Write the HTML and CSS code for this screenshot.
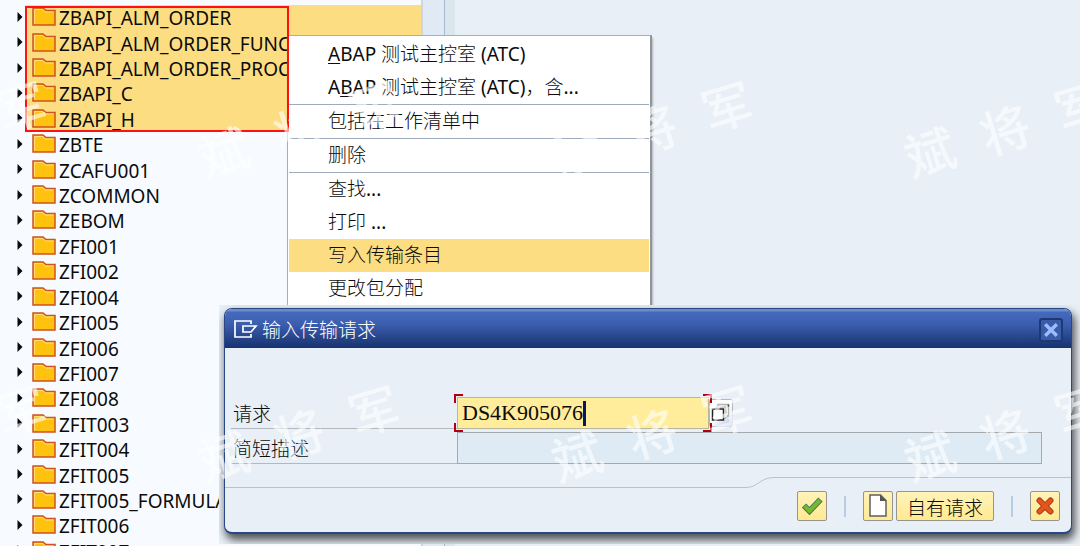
FILE: index.html
```
<!DOCTYPE html>
<html lang="zh-CN">
<head>
<meta charset="utf-8">
<title>输入传输请求</title>
<link rel="stylesheet" href="styles.css">
</head>
<body>
<svg class="defs" aria-hidden="true">
  <symbol id="arrow" viewBox="0 0 6 12"><path d="M0.500 1L5.500 6L0.500 11Z" fill="#0a0a0a"/></symbol>
  <symbol id="folder" viewBox="0 0 24 19">
    <path d="M1 1H11L14 3.500H23V18H1Z" fill="#ffc20f" stroke="#cf5220" stroke-width="1.500"/>
    <path d="M2.500 16.500V2.500H10.500L13.500 5H21.500" fill="none" stroke="#ffdf7a"/>
  </symbol>
</svg>

<main class="workspace">
  <nav class="tree-pane" aria-label="包">
    <ul class="tree">
      <li class="node selected"><svg class="arrow"><use href="#arrow"/></svg><span class="cell"><svg class="folder"><use href="#folder"/></svg>ZBAPI_ALM_ORDER</span></li>
      <li class="node selected"><svg class="arrow"><use href="#arrow"/></svg><span class="cell"><svg class="folder"><use href="#folder"/></svg>ZBAPI_ALM_ORDER_FUNC</span></li>
      <li class="node selected"><svg class="arrow"><use href="#arrow"/></svg><span class="cell"><svg class="folder"><use href="#folder"/></svg>ZBAPI_ALM_ORDER_PROC</span></li>
      <li class="node selected"><svg class="arrow"><use href="#arrow"/></svg><span class="cell"><svg class="folder"><use href="#folder"/></svg>ZBAPI_C</span></li>
      <li class="node selected"><svg class="arrow"><use href="#arrow"/></svg><span class="cell"><svg class="folder"><use href="#folder"/></svg>ZBAPI_H</span></li>
      <li class="node"><svg class="arrow"><use href="#arrow"/></svg><span class="cell"><svg class="folder"><use href="#folder"/></svg>ZBTE</span></li>
      <li class="node"><svg class="arrow"><use href="#arrow"/></svg><span class="cell"><svg class="folder"><use href="#folder"/></svg>ZCAFU001</span></li>
      <li class="node"><svg class="arrow"><use href="#arrow"/></svg><span class="cell"><svg class="folder"><use href="#folder"/></svg>ZCOMMON</span></li>
      <li class="node"><svg class="arrow"><use href="#arrow"/></svg><span class="cell"><svg class="folder"><use href="#folder"/></svg>ZEBOM</span></li>
      <li class="node"><svg class="arrow"><use href="#arrow"/></svg><span class="cell"><svg class="folder"><use href="#folder"/></svg>ZFI001</span></li>
      <li class="node"><svg class="arrow"><use href="#arrow"/></svg><span class="cell"><svg class="folder"><use href="#folder"/></svg>ZFI002</span></li>
      <li class="node"><svg class="arrow"><use href="#arrow"/></svg><span class="cell"><svg class="folder"><use href="#folder"/></svg>ZFI004</span></li>
      <li class="node"><svg class="arrow"><use href="#arrow"/></svg><span class="cell"><svg class="folder"><use href="#folder"/></svg>ZFI005</span></li>
      <li class="node"><svg class="arrow"><use href="#arrow"/></svg><span class="cell"><svg class="folder"><use href="#folder"/></svg>ZFI006</span></li>
      <li class="node"><svg class="arrow"><use href="#arrow"/></svg><span class="cell"><svg class="folder"><use href="#folder"/></svg>ZFI007</span></li>
      <li class="node"><svg class="arrow"><use href="#arrow"/></svg><span class="cell"><svg class="folder"><use href="#folder"/></svg>ZFI008</span></li>
      <li class="node"><svg class="arrow"><use href="#arrow"/></svg><span class="cell"><svg class="folder"><use href="#folder"/></svg>ZFIT003</span></li>
      <li class="node"><svg class="arrow"><use href="#arrow"/></svg><span class="cell"><svg class="folder"><use href="#folder"/></svg>ZFIT004</span></li>
      <li class="node"><svg class="arrow"><use href="#arrow"/></svg><span class="cell"><svg class="folder"><use href="#folder"/></svg>ZFIT005</span></li>
      <li class="node"><svg class="arrow"><use href="#arrow"/></svg><span class="cell"><svg class="folder"><use href="#folder"/></svg>ZFIT005_FORMULA</span></li>
      <li class="node"><svg class="arrow"><use href="#arrow"/></svg><span class="cell"><svg class="folder"><use href="#folder"/></svg>ZFIT006</span></li>
      <li class="node"><svg class="arrow"><use href="#arrow"/></svg><span class="cell"><svg class="folder"><use href="#folder"/></svg>ZFIT007</span></li>
    </ul>
  </nav>
  <div class="scroll-strip"></div>
  <div class="splitter"></div>
  <section class="canvas"></section>
</main>

<div class="context-menu" role="menu">
  <button class="item" role="menuitem"><u>A</u>BAP <span class="han">测试主控室</span> (ATC)</button>
  <button class="item" role="menuitem">A<u>B</u>AP <span class="han">测试主控室</span> (ATC)<span class="han">，含</span>...</button>
  <hr class="rule">
  <button class="item" role="menuitem"><span class="han">包括在工作清单中</span></button>
  <hr class="rule">
  <button class="item" role="menuitem"><span class="han">删除</span></button>
  <hr class="rule">
  <button class="item" role="menuitem"><span class="han">查找</span>...</button>
  <button class="item" role="menuitem"><span class="han">打印</span> ...</button>
  <button class="item active" role="menuitem"><span class="han">写入传输条目</span></button>
  <button class="item" role="menuitem"><span class="han">更改包分配</span></button>
</div>

<div class="marker"></div>

<div class="dialog-layer">
  <form class="dialog" role="dialog" aria-labelledby="dialog-title">
    <header class="titlebar">
      <svg class="title-icon" viewBox="0 0 24 18"><path d="M17 4V1H1V17H17V14M9 6H22L17 12H9Z" fill="none" stroke="#fff" stroke-width="1.700"/></svg>
      <h1 class="title han" id="dialog-title">输入传输请求</h1>
      <button class="close" type="button" aria-label="关闭"><svg viewBox="0 0 14 14"><path d="M3 3L11 11M11 3L3 11" stroke="#9dbcff" stroke-width="3" stroke-linecap="square"/></svg></button>
    </header>
    <div class="fields">
      <label class="label han" for="request">请求</label>
      <div class="request-cell">
        <div class="focus-frame">
          <input class="input request" id="request" type="text" value="DS4K905076">
          <span class="caret"></span>
          <i class="corner tl"></i><i class="corner tr"></i><i class="corner bl"></i><i class="corner br"></i>
        </div>
        <button class="value-help" type="button" aria-label="值帮助"><svg viewBox="0 0 20 20"><path d="M7 1.500H17.500V13H15Z" fill="#fff"/><path d="M7 3V1.500H17.500V13H16" fill="none" stroke="#444" stroke-width="1.500"/><path d="M5 6V4H15V15H13" fill="#fff" stroke="#999"/><rect x="1.500" y="6" width="11" height="11" fill="#fff" stroke="#222" stroke-width="1.500"/></svg></button>
      </div>
      <label class="label han" for="description">简短描述</label>
      <input class="input description" id="description" type="text" readonly>
    </div>
    <div class="edge">
      <span class="edge-low"></span>
      <svg class="edge-curve" viewBox="0 0 28 11"><path d="M0 10.500C12 10.500 14 0.500 28 0.500" fill="none" stroke="#b9c3d0"/></svg>
      <span class="edge-high"></span>
    </div>
    <footer class="actions">
      <button class="btn" type="submit" aria-label="继续"><svg viewBox="0 0 22 24"><path d="M3 11.500L8.500 17L19.500 5.500" fill="none" stroke="#3f7460" stroke-width="6"/><path d="M3.500 12L8.500 17L19 6" fill="none" stroke="#77b82a" stroke-width="4"/></svg></button>
      <span class="divider"></span>
      <div class="group">
        <button class="btn" type="button" aria-label="创建请求"><svg viewBox="0 0 22 24"><path d="M3 1H13.500L19 6.500V22H3Z" fill="#fff" stroke="#5f5f5f" stroke-width="1.500"/><path d="M13 1V7H19.500Z" fill="#555"/></svg></button>
        <button class="btn wide han" type="button">自有请求</button>
      </div>
      <span class="divider"></span>
      <button class="btn" type="button" aria-label="取消"><svg viewBox="0 0 22 24"><path d="M5.500 6.500L16.500 17.500M16.500 6.500L5.500 17.500" stroke="#a8341a" stroke-width="6" stroke-linecap="round"/><path d="M5.500 6.500L16.500 17.500M16.500 6.500L5.500 17.500" stroke="#e2561a" stroke-width="4" stroke-linecap="round"/></svg></button>
    </footer>
  </form>
</div>

<svg class="watermark" aria-hidden="true">
  <defs>
    <pattern id="mark" x="-132" y="-60" width="353" height="304" patternUnits="userSpaceOnUse">
      <g class="mark-text">
        <text transform="translate(4 212) rotate(-17)" x="-26" y="19">斌</text>
        <text transform="translate(79 190) rotate(-17)" x="-26" y="19">将</text>
        <text transform="translate(154 167) rotate(-17)" x="-26" y="19">军</text>
        <text transform="translate(357 212) rotate(-17)" x="-26" y="19">斌</text>
      </g>
    </pattern>
  </defs>
  <rect width="100%" height="100%" fill="url(#mark)"/>
</svg>
</body>
</html>
```
FILE: styles.css
```
* { box-sizing: border-box; }

body {
  position: relative;
  margin: 0;
  height: 100vh;
  overflow: hidden;
  background: #e8eff6;
  color: #0b0b0b;
  font: 19px/25px "Noto Sans", "Noto Sans CJK SC", sans-serif;
}

button, input { font: inherit; color: inherit; }
button { padding: 0; border: 0; background: none; }
.defs { position: absolute; width: 0; height: 0; }
.han { font-family: "Noto Sans CJK SC", sans-serif; font-weight: 300; }

/* Object tree */
.workspace { display: flex; height: 100%; overflow: hidden; }
.tree-pane { flex: 0 0 421px; padding-top: 5px; background: #f7faff; }
.tree {
  display: grid;
  grid-auto-rows: 1fr;
  height: 559px;
  margin: 0;
  padding: 0;
  list-style: none;
}
.node { display: flex; align-items: center; gap: 9px; padding-left: 17px; min-height: 0; }
.arrow { flex: none; width: 6px; height: 12px; margin-bottom: 2px; }
.cell { display: flex; align-items: center; align-self: stretch; gap: 3px; padding-top: 2px; white-space: nowrap; }
.folder { flex: none; width: 24px; height: 19px; margin-bottom: 4px; }
.selected { background: linear-gradient(90deg, transparent 26px, #fddd82 26px); }
.scroll-strip { flex: 0 0 24px; background: #e1eaf4; border-left: 2px solid #cbd6e2; border-right: 1px solid #a9b9cc; }
.splitter { flex: 0 0 10px; background: #dbe5ed; }
.canvas { flex: 1; }

/* Highlight frame round the selected packages */
.marker { position: absolute; left: 25px; top: 6px; width: 264px; height: 126px; border: 2px solid #f11; }

/* Context menu */
.context-menu {
  position: absolute;
  left: 287px;
  top: 35px;
  width: 365px;
  padding: 2px 1px;
  display: flex;
  flex-direction: column;
  background: #fff;
  border: 1px solid #a9afb5;
  border-right: 2px solid #8f9599;
  box-shadow: 1px 3px 2px rgba(0, 0, 0, .25);
}
.item { height: 33px; padding: 2px 39px 6px; text-align: left; white-space: nowrap; }
.item u { text-underline-offset: 2px; text-decoration-thickness: 1px; }
.item.active { background: #fddd82; }
.rule { width: 100%; height: 1px; margin: 0; border: 0; background: #9dabbd; }

/* Dialog */
.dialog-layer {
  position: absolute;
  left: 219px;
  right: 0;
  top: 305px;
  bottom: 2px;
  padding: 3px 8px 10px 5px;
  display: flex;
  overflow: hidden;
  background: #e8eff6;
}
.dialog {
  flex: 1;
  display: flex;
  flex-direction: column;
  margin: 0;
  overflow: hidden;
  background: #e8eff6;
  border: 1px solid #284784;
  border-bottom-width: 2px;
  border-radius: 8px;
  box-shadow: 2px 5px 9px 1px rgba(0, 0, 0, .65);
}
.titlebar {
  display: flex;
  align-items: center;
  gap: 4px;
  height: 39px;
  padding: 3px 8px 0 9px;
  color: #fff;
  background: linear-gradient(#6a8cc8 0, #6a8cc8 2px, #456abd 3px, #3b5dae 40%, #17326e 100%);
}
.title-icon { width: 24px; height: 18px; margin-bottom: 2px; }
.title { flex: 1; margin: 0; padding-bottom: 4px; font-size: 19px; line-height: 25px; }
.close {
  display: flex;
  align-items: center;
  justify-content: center;
  width: 24px;
  height: 24px;
  background: #3a5ba8;
  border: 2px solid #1d3877;
  border-radius: 3px;
}
.close svg { width: 16px; height: 16px; }

.fields {
  display: grid;
  grid-template-columns: 226px 1fr;
  row-gap: 3px;
  padding: 49px 29px 0 6px;
}
.label { display: flex; align-items: center; height: 32px; padding-left: 2px; border-bottom: 1px solid #b3b8bd; }
.request-cell { display: flex; align-items: center; height: 32px; }
.focus-frame { position: relative; width: 252px; }
.input { display: block; width: 100%; height: 32px; padding: 0 4px; border: 1px solid #a4a9ad; border-radius: 0; outline: 0; }
.request { background: #ffed9c; border-color: #b9b59a; font: 22px/30px "Liberation Serif", serif; }
.description { background: #deebf5; }
.caret { position: absolute; left: 126px; top: 4px; width: 3px; height: 25px; background: #0a1560; }
.corner { position: absolute; width: 9px; height: 9px; border: 0 solid #b3000f; }
.tl { left: -3px; top: -3px; border-width: 2px 0 0 2px; }
.tr { right: -3px; top: -3px; border-width: 2px 2px 0 0; }
.bl { left: -3px; bottom: -3px; border-width: 0 0 2px 2px; }
.br { right: -3px; bottom: -3px; border-width: 0 2px 2px 0; }
.value-help {
  display: flex;
  align-items: center;
  justify-content: center;
  width: 24px;
  height: 28px;
  background: linear-gradient(135deg, #fff 50%, #b4c6e4);
  border: 1px solid #b3b9c1;
  border-radius: 2px;
}
.value-help svg { flex: none; width: 20px; height: 20px; }

.edge { display: flex; height: 11px; margin-top: 13px; }
.edge-low { flex: 1; border-bottom: 1px solid #b9c3d0; }
.edge-curve { width: 28px; height: 11px; }
.edge-high { width: 297px; border-top: 1px solid #b9c3d0; }

.actions { display: flex; align-items: center; justify-content: flex-end; gap: 17px; padding: 3px 11px 0; }
.group { display: flex; gap: 3px; }
.divider { width: 2px; height: 21px; background: #b6cde4; }
.btn {
  display: flex;
  align-items: center;
  justify-content: center;
  width: 30px;
  height: 30px;
  background: linear-gradient(#fff3b8, #ffe992);
  border: 1px solid #97948a;
  border-radius: 2px;
}
.btn svg { width: 22px; height: 24px; }
.wide { width: 98px; }

/* Author's mark, repeated over the page */
.watermark { position: absolute; inset: 0; width: 100%; height: 100%; pointer-events: none; }
.mark-text { fill: #fff; fill-opacity: .6; font: 500 50px "Noto Sans CJK SC", sans-serif; }
```
